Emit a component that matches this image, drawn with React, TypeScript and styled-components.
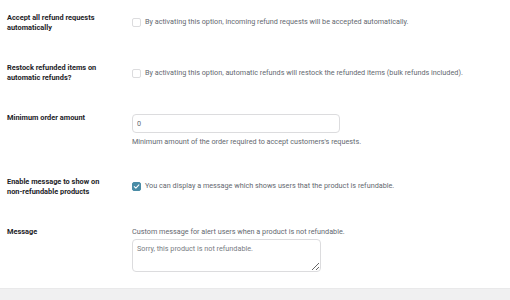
import React from "react";
import styled, { createGlobalStyle } from "styled-components";

const Global = createGlobalStyle`
  html, body { margin: 0; padding: 0; background: #ffffff; }
  body { font-family: Roboto, "Liberation Sans", sans-serif; width: 510px; height: 300px; overflow: hidden; }
`;

const Page = styled.div`
  display: flex;
  flex-direction: column;
  height: 300px;
`;

const Form = styled.div`
  display: flex;
  flex-direction: column;
  gap: 30px;
  padding: 13px 0 0 7px;
`;

const Row = styled.div`
  display: grid;
  grid-template-columns: 125px 1fr;
  align-items: start;
`;

const Label = styled.div`
  font-size: 7.4px;
  line-height: 10px;
  font-weight: 700;
  color: #1d2327;
  width: 105px;
`;

const Field = styled.div`
  display: flex;
  flex-direction: column;
  align-items: flex-start;
`;

const CheckLine = styled.label<{ $top: number }>`
  display: flex;
  align-items: center;
  gap: 4px;
  margin-top: ${(p) => p.$top}px;
`;

const Box = styled.span<{ $checked?: boolean }>`
  width: 9px;
  height: 9px;
  box-sizing: border-box;
  border-radius: 2px;
  border: 1px solid ${(p) => (p.$checked ? "#4a8ca6" : "#dcdcde")};
  background: ${(p) => (p.$checked ? "#4a8ca6" : "#ffffff")};
  display: flex;
  align-items: center;
  justify-content: center;
  flex: none;
`;

const Desc = styled.span`
  font-size: 7.25px;
  line-height: 10px;
  color: #646970;
  white-space: nowrap;
`;

const Help = styled(Desc)<{ $top?: number }>`
  display: block;
  margin-top: ${(p) => p.$top ?? 0}px;
`;

const TextInput = styled.input`
  margin-top: 1px;
  width: 208px;
  height: 19px;
  box-sizing: border-box;
  border: 1px solid #dcdcde;
  border-radius: 4px;
  padding: 0 4px;
  font-family: Roboto, "Liberation Sans", sans-serif;
  font-size: 7.25px;
  color: #646970;
  outline: none;
  background: #fff;
`;

const Area = styled.textarea`
  margin-top: 2px;
  width: 189px;
  height: 33px;
  box-sizing: border-box;
  border: 1px solid #dcdcde;
  border-radius: 4px;
  padding: 4px 4px;
  font-family: Roboto, "Liberation Sans", sans-serif;
  font-size: 7.25px;
  line-height: 10px;
  color: #787c82;
  outline: none;
  background: #fff;
  display: block;
`;

const Footer = styled.div`
  margin-top: auto;
  height: 11px;
  background: #f0f0f1;
  border-top: 1px solid #e9e9ea;
`;

const Check = ({ checked }: { checked?: boolean }) => (
  <Box $checked={checked}>
    {checked && (
      <svg width="7" height="7" viewBox="0 0 10 10">
        <path d="M1.8 5.2 L4.1 7.4 L8.4 2.6" fill="none" stroke="#fff" strokeWidth="1.5" strokeLinecap="round" strokeLinejoin="round" />
      </svg>
    )}
  </Box>
);

export default function App() {
  return (
    <Page>
      <Global />
      <Form>
        <Row>
          <Label>Accept all refund requests automatically</Label>
          <Field>
            <CheckLine $top={4}>
              <Check />
              <Desc>By activating this option, incoming refund requests will be accepted automatically.</Desc>
            </CheckLine>
          </Field>
        </Row>
        <Row>
          <Label>Restock refunded items on automatic refunds?</Label>
          <Field>
            <CheckLine $top={5}>
              <Check />
              <Desc>By activating this option, automatic refunds will restock the refunded items (bulk refunds included).</Desc>
            </CheckLine>
          </Field>
        </Row>
        <Row>
          <Label>Minimum order amount</Label>
          <Field>
            <TextInput defaultValue="0" />
            <Help $top={4}>Minimum amount of the order required to accept customers's requests.</Help>
          </Field>
        </Row>
        <Row>
          <Label>Enable message to show on non-refundable products</Label>
          <Field>
            <CheckLine $top={4}>
              <Check checked />
              <Desc>You can display a message which shows users that the product is refundable.</Desc>
            </CheckLine>
          </Field>
        </Row>
        <Row>
          <Label>Message</Label>
          <Field>
            <Help>Custom message for alert users when a product is not refundable.</Help>
            <Area defaultValue="Sorry, this product is not refundable." />
          </Field>
        </Row>
      </Form>
      <Footer />
    </Page>
  );
}
